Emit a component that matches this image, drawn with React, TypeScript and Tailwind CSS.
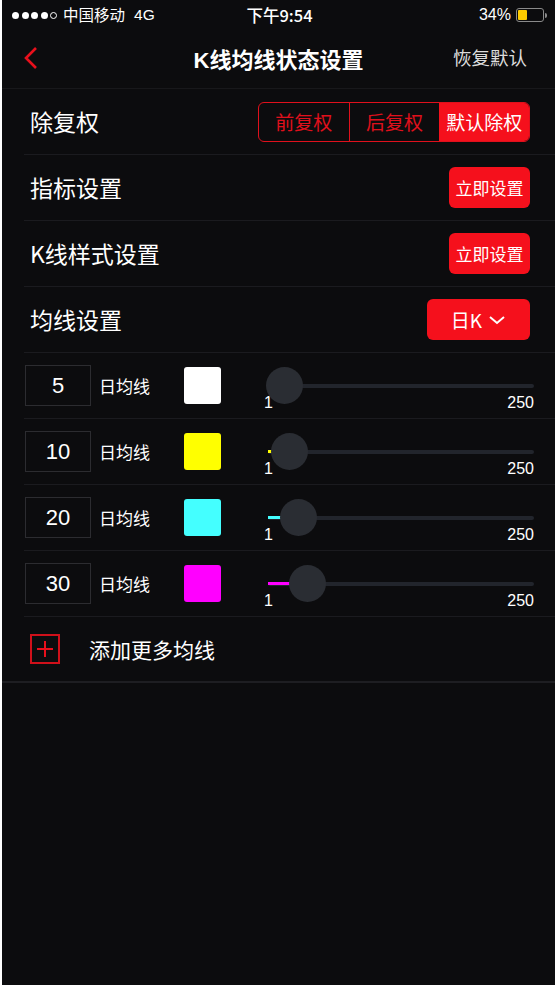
const FONT = "font-['Liberation_Sans','Noto_Sans_CJK_SC',sans-serif]";

type MA = { days: number; color: string; value: number };

const LINES: MA[] = [
  { days: 5, color: "#ffffff", value: 5 },
  { days: 10, color: "#ffff00", value: 10 },
  { days: 20, color: "#44ffff", value: 20 },
  { days: 30, color: "#ff00ff", value: 30 },
];

function StatusBar() {
  return (
    <div className="flex h-[30px] items-center justify-between pl-[10px] pr-[8px] text-[15px] text-white">
      <div className="flex w-[180px] items-center">
        {[0, 1, 2, 3].map((i) => (
          <span key={i} className="mr-[2.5px] h-[7px] w-[7px] rounded-full bg-white" />
        ))}
        <span className="mr-[6px] h-[7px] w-[7px] rounded-full border border-white" />
        <span className="font-['Noto_Sans_CJK_SC',sans-serif] text-[15.5px] leading-none">中国移动</span>
        <span className="ml-[9px] text-[15.5px] leading-none">4G</span>
      </div>
      <div className="font-['Noto_Sans_CJK_SC',sans-serif] text-[16.5px] font-medium leading-none">下午9:54</div>
      <div className="flex w-[180px] items-center justify-end">
        <span className="mr-[5px] text-[16px] leading-none">34%</span>
        <div className="flex h-[14px] w-[28px] items-center rounded-[3px] border border-[#8a8a8a] p-[1px]">
          <div className="h-full w-[9px] rounded-[1px] bg-[#ffcc00]" />
        </div>
        <div className="ml-[1px] h-[5px] w-[2px] rounded-r-sm bg-[#8a8a8a]" />
      </div>
    </div>
  );
}

function NavBar() {
  return (
    <div className="relative flex h-[58px] items-center justify-center">
      <svg className="absolute left-[20px] top-[16px]" width="18" height="24" viewBox="0 0 18 24">
        <polyline points="14,2 4,12 14,22" fill="none" stroke="#e8101c" strokeWidth="2.6" />
      </svg>
      <div className="font-['Noto_Sans_CJK_SC',sans-serif] text-[22px] font-bold leading-none text-white">
        <span className="font-['Liberation_Sans',sans-serif]">K</span>线均线状态设置
      </div>
      <div className="absolute right-[28px] top-[18px] font-['Noto_Sans_CJK_SC',sans-serif] text-[18.5px] leading-none text-[#dcdcdc]">
        恢复默认
      </div>
    </div>
  );
}

function Row({ label, children }: { label: string; children: React.ReactNode }) {
  return (
    <div className="ml-[22px] flex h-[66px] items-center justify-between border-b border-[#1b1b1f] pl-[6px] pr-[25px]">
      <span className="font-['Noto_Sans_CJK_SC',sans-serif] text-[23px] leading-none text-white">{label}</span>
      {children}
    </div>
  );
}

function RedButton({ children, w }: { children: React.ReactNode; w: string }) {
  return (
    <div
      className={`flex h-[41px] ${w} items-center justify-center rounded-[6px] bg-[#f5101c] font-['Noto_Sans_CJK_SC',sans-serif] text-[17px] leading-none text-white`}
    >
      {children}
    </div>
  );
}

function Segments() {
  return (
    <div className="flex h-[40px] w-[272px] overflow-hidden rounded-[6px] border border-[#e0101c] font-['Noto_Sans_CJK_SC',sans-serif] text-[19px] leading-none">
      <div className="flex flex-1 items-center justify-center border-r border-[#e0101c] text-[#e0101c]">前复权</div>
      <div className="flex flex-1 items-center justify-center text-[#e0101c]">后复权</div>
      <div className="flex flex-1 items-center justify-center bg-[#f5101c] text-white">默认除权</div>
    </div>
  );
}

function Slider({ value, color }: { value: number; color: string }) {
  const center = 13 + (value - 1) * 0.9;
  return (
    <div className="ml-[43px] flex w-[270px] flex-col self-start pt-[31px]">
      <div className="relative ml-[4px] h-[4px] rounded-full bg-[#22252c]">
        <div className="absolute left-0 top-0 h-[3px]" style={{ width: center, backgroundColor: color }} />
        <div
          className="absolute top-[-17px] h-[37px] w-[37px] rounded-full bg-[#2a2d33]"
          style={{ left: center - 18.5 }}
        />
      </div>
      <div className="mt-[7px] flex justify-between text-[16px] leading-none text-white">
        <span>1</span>
        <span>250</span>
      </div>
    </div>
  );
}

function MaRow({ ma }: { ma: MA }) {
  return (
    <div className="ml-[22px] flex h-[66px] items-center border-b border-[#1b1b1f] pl-[1px]">
      <div className="flex h-[41px] w-[66px] items-center justify-center border border-[#2c2c30] text-[22px] leading-none text-white">
        {ma.days}
      </div>
      <span className="ml-[8px] font-['Noto_Sans_CJK_SC',sans-serif] text-[17px] leading-none text-white">日均线</span>
      <div className="ml-[34px] h-[37px] w-[37px] rounded-[3px]" style={{ backgroundColor: ma.color }} />
      <Slider value={ma.value} color={ma.color} />
    </div>
  );
}

export default function App() {
  return (
    <div className={`min-h-screen bg-white ${FONT}`}>
      <div className="ml-[2px] mr-[3px] flex h-[985px] flex-col bg-[#0c0c0e]">
        <StatusBar />
        <NavBar />
        <div className="border-t border-[#18181b]">
          <Row label="除复权">
            <Segments />
          </Row>
          <Row label="指标设置">
            <RedButton w="w-[81px]">立即设置</RedButton>
          </Row>
          <Row label="K线样式设置">
            <RedButton w="w-[81px]">立即设置</RedButton>
          </Row>
          <Row label="均线设置">
            <RedButton w="w-[103px]">
              <span className="text-[19px]">日K</span>
              <svg className="ml-[6px]" width="18" height="12" viewBox="0 0 18 12">
                <polyline points="2,3 9,9 16,3" fill="none" stroke="#fff" strokeWidth="2" />
              </svg>
            </RedButton>
          </Row>
          {LINES.map((ma) => (
            <MaRow key={ma.days} ma={ma} />
          ))}
          <div className="flex h-[66px] items-center border-b-2 border-[#1e1e22] pl-[28px]">
            <div className="flex h-[30px] w-[30px] items-center justify-center border-2 border-[#d0101a]">
              <svg width="20" height="20" viewBox="0 0 20 20">
                <path d="M10 2V18M2 10H18" stroke="#e8101c" strokeWidth="2" />
              </svg>
            </div>
            <span className="ml-[29px] font-['Noto_Sans_CJK_SC',sans-serif] text-[21px] leading-none text-white">
              添加更多均线
            </span>
          </div>
        </div>
      </div>
    </div>
  );
}
